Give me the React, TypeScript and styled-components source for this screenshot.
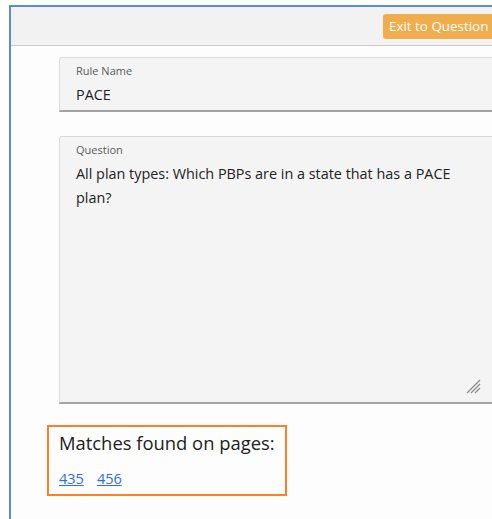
import React from 'react';
import styled, { createGlobalStyle } from 'styled-components';

const GlobalStyle = createGlobalStyle`
  html, body {
    margin: 0;
    padding: 0;
    background: #ffffff;
    overflow: hidden;
  }
  body {
    font-family: 'Open Sans', 'Noto Sans', 'Liberation Sans', sans-serif;
    color: #222;
  }
`;

const Panel = styled.div`
  margin: 5px 0 0 9px;
  width: 580px;
  height: 520px;
  border-top: 2px solid #5b8bd3;
  border-left: 2px solid #5b8bd3;
  background: #fdfdfd;
`;

const Header = styled.div`
  height: 38px;
  display: flex;
  align-items: center;
  padding-left: 372px;
  background: #f3f2f2;
  border-bottom: 1px solid #c9c9c9;
`;

const ExitButton = styled.button`
  height: 25px;
  padding: 0 6px;
  border: none;
  border-radius: 3px;
  background: #f0ad4e;
  color: #ffffff;
  font-family: inherit;
  font-size: 13.4px;
  white-space: nowrap;
`;

const Content = styled.div`
  padding: 11px 0 0 36px;
`;

const Field = styled.div<{ tall?: boolean }>`
  position: relative;
  margin-left: 12px;
  width: 436px;
  height: ${p => (p.tall ? '268px' : '55px')};
  box-sizing: border-box;
  padding: 6px 16px 0;
  background: #f4f4f4;
  border: 1px solid #dadada;
  border-bottom: 2px solid #a3a3a3;
  border-radius: 3px 3px 0 0;
  & + & {
    margin-top: 24px;
  }
`;

const Label = styled.div`
  font-size: 11px;
  line-height: 14px;
  color: #5a5a5a;
`;

const Value = styled.div`
  margin-top: 5px;
  font-size: 14.4px;
  line-height: 24px;
  color: #222;
  width: 400px;
`;

const Grip = styled.svg`
  position: absolute;
  right: 13px;
  bottom: 8px;
`;

const Matches = styled.div`
  display: inline-block;
  margin-top: 21px;
  width: 240px;
  height: 71px;
  box-sizing: border-box;
  padding: 2px 0 0 10px;
  border: 2px solid #ff7f27;
`;

const MatchesTitle = styled.div`
  font-size: 18.4px;
  line-height: 28px;
  color: #222;
  white-space: nowrap;
`;

const Pages = styled.div`
  margin-top: 12px;
  display: flex;
  gap: 13px;
`;

const PageLink = styled.a`
  font-size: 14.5px;
  color: #2f6fe0;
  text-decoration: underline;
`;

const App: React.FC = () => {
  const pages = [435, 456];

  return (
    <>
      <GlobalStyle />
      <Panel>
        <Header>
          <ExitButton type='button'>Exit to Question</ExitButton>
        </Header>
        <Content>
          <Field>
            <Label>Rule Name</Label>
            <Value>PACE</Value>
          </Field>
          <Field tall>
            <Label>Question</Label>
            <Value>
              All plan types: Which PBPs are in a state that has a PACE plan?
            </Value>
            <Grip width='16' height='16' viewBox='0 0 16 16'>
              <g stroke='#8a8a8a' strokeWidth='1.2'>
                <line x1='2' y1='15' x2='15' y2='2' />
                <line x1='6' y1='15' x2='15' y2='6' />
                <line x1='10' y1='15' x2='15' y2='10' />
              </g>
            </Grip>
          </Field>
          <Matches>
            <MatchesTitle>Matches found on pages:</MatchesTitle>
            <Pages>
              {pages.map(p => (
                <PageLink key={p} href='#'>
                  {p}
                </PageLink>
              ))}
            </Pages>
          </Matches>
        </Content>
      </Panel>
    </>
  );
};

export default App;
